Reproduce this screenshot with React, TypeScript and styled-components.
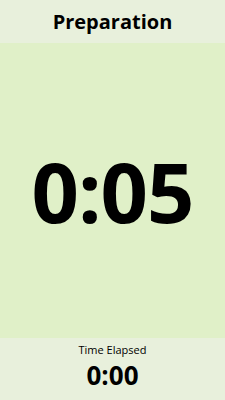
import { createGlobalStyle, styled } from 'styled-components';

const GlobalStyle = createGlobalStyle`
    html, body, #root {
        margin: 0;
        padding: 0;
        height: 100%;
    }
    body {
        font-family: "Open Sans", "Noto Sans", sans-serif;
        color: #000;
    }
`;

const Screen = styled.div`
    display: flex;
    flex-direction: column;
    height: 100vh;
    width: 100%;
`;

const Header = styled.div`
    height: 43px;
    background: #e8f0dc;
    display: flex;
    align-items: center;
    justify-content: center;
    font-size: 20px;
    font-weight: 700;
`;

const Countdown = styled.div`
    flex: 1;
    background: #e0f0c8;
    display: flex;
    align-items: center;
    justify-content: center;
    font-size: 83px;
    font-weight: 700;
    letter-spacing: -1px;
`;

const Footer = styled.div`
    height: 62px;
    background: #e8f0dc;
    display: flex;
    flex-direction: column;
    align-items: center;
    padding-top: 4px;
    box-sizing: border-box;
`;

const Label = styled.div`
    font-size: 11px;
    line-height: 16px;
`;

const Elapsed = styled.div`
    font-size: 26px;
    font-weight: 700;
    line-height: 34px;
`;

export default function App() {
    return (
        <Screen>
            <GlobalStyle />
            <Header>Preparation</Header>
            <Countdown>0:05</Countdown>
            <Footer>
                <Label>Time Elapsed</Label>
                <Elapsed>0:00</Elapsed>
            </Footer>
        </Screen>
    );
}
